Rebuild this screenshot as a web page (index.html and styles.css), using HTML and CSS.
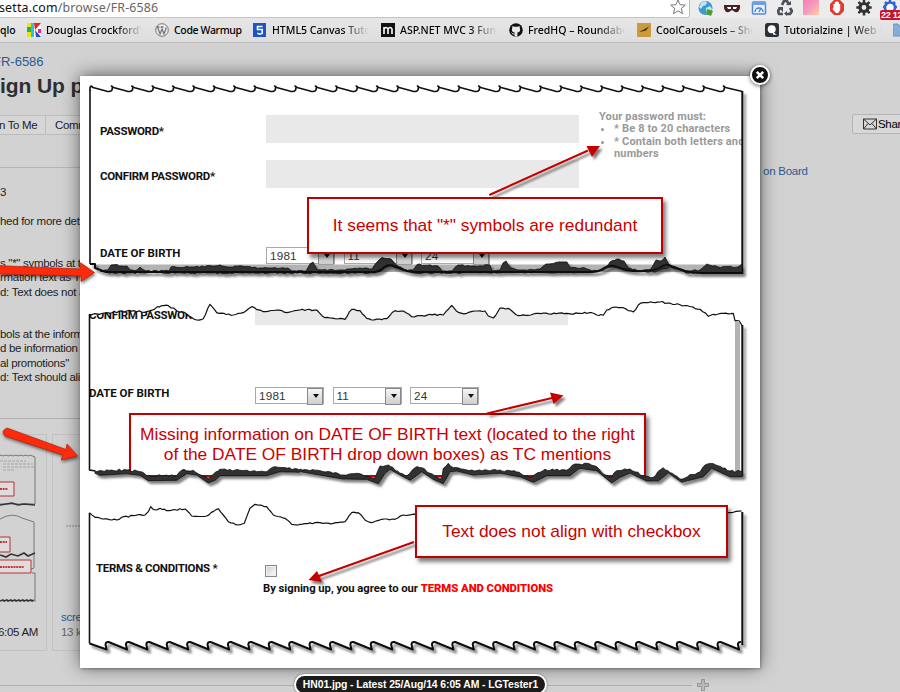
FILE: index.html
```html
<!DOCTYPE html>
<html lang="en">
<head>
<meta charset="utf-8">
<title>FR-6586</title>
<link rel="stylesheet" href="styles.css">
</head>
<body>
<header class="toolbar">
  <div class="address">
    <span class="url">setta.com<span class="url-path">/browse/FR-6586</span></span>
    <svg class="star" viewBox="0 0 16 16"><path d="M8 .8l2.1 4.9 5.2.4-4 3.4 1.3 5.2L8 11.900l-4.600 2.800 1.300-5.200-4-3.400 5.200-.4z" fill="#fff" stroke="#777" stroke-width="1"/></svg>
  </div>
  <div class="extensions">
    <svg viewBox="0 0 16 16"><circle cx="7.500" cy="8" r="7" fill="#3a9bd0"/><path d="M3 3q3-3 6-1l-1 3-3 1-2 3-2-2zM8 8l4-2 2 3-3 5-3 0z" fill="#bfe6ef"/><path d="M9 9l6 2-2 5-5-2z" fill="#4f9c2d"/></svg>
    <svg viewBox="0 0 16 16"><path d="M3 0h10v15H3z" fill="#eee"/><path d="M0 5h16v3q-1 5-5 4l-3-2-3 2q-4 1-5-4z" fill="#4b2020"/><path d="M3 7h4v2H4zM9 7h4l-1 2H9z" fill="#fff"/></svg>
    <svg viewBox="0 0 16 16"><rect x="1.500" y="2" width="13" height="12" rx="1" fill="#e8f0fb" stroke="#5489d8" stroke-width="1.500"/><path d="M1 2h14v3H1z" fill="#6d9fe8"/><path d="M4 12a4 4 0 0 1 8 0M8 12l2-4" fill="none" stroke="#4c80c8" stroke-width="1.300"/></svg>
    <svg viewBox="0 0 16 16"><g fill="none" stroke="#4b5157" stroke-width="2.700"><path d="M5 5l2-4h3l2 4M13 8l2 3-2 3H9M6 14H2l-1-3 2-3"/></g><path d="M9 5h5V1zM10 11v5l-3-2.500zM1 7h5v5z" fill="#4b5157"/></svg>
    <svg viewBox="0 0 16 16"><defs><linearGradient id="swatch" x2="1" y2="1"><stop stop-color="#f77cb8"/><stop offset=".5" stop-color="#f59bbf"/><stop offset="1" stop-color="#ffcf9a"/></linearGradient></defs><path d="M0 0h16v15H0z" fill="url(#swatch)"/></svg>
    <svg viewBox="0 0 16 16"><path d="M5 0h6l4 4v7l-4 4H5l-4-4V4z" fill="#e23b31"/><path d="M4.500 8V4h1.300V2h1.400v-.7h1.400V2H10v2h1.200v6l-2 3H7L3.500 9z" fill="#fff"/></svg>
    <svg viewBox="0 0 16 16"><circle cx="8" cy="7.500" r="4" fill="none" stroke="#333" stroke-width="3.200"/><path d="M8 0v3M8 12v3.500M.3 7.500h3M12.700 7.500h3M2.500 2l2.200 2.200M11.300 10.800l2.300 2.300M13.500 2l-2.200 2.200M4.700 10.800l-2.300 2.300" stroke="#333" stroke-width="2.500"/></svg>
    <div class="counter">
      <svg viewBox="0 0 16 16"><circle cx="8" cy="7.500" r="5" fill="#fff" stroke="#2b67d6" stroke-width="2.600"/><path d="M8 0v2M1 7h2M13 7h2M3 2l1.500 1.500M13 2l-1.500 1.500" stroke="#2b67d6" stroke-width="2.500"/></svg>
      <span class="counter-badge">22 12</span>
    </div>
  </div>
</header>

<nav class="bookmarks">
  <span class="bookmark first"><span class="name">qlo</span></span>
  <span class="bookmark"><svg viewBox="0 0 14 14"><path fill="#fff" d="M0 0h14v14H0z"/><path d="M0 0h4v4H0zM0 9h5v5H0z" fill="#f2e200"/><path d="M0 4h4v5H0z" fill="#28b34a"/><path d="M4 0h3v14H4z" fill="#2ac3d8"/><path d="M7 0h7L8 7z" fill="#e8231c"/><path d="M8 7l6 7H9z" fill="#2848d0"/><path d="M11 6h3v4h-3z" fill="#de2a83"/></svg><span class="name">Douglas Crockford's</span></span>
  <span class="bookmark short"><svg viewBox="0 0 14 14"><circle cx="7" cy="7" r="6.300" fill="#eee" stroke="#777"/><path d="M2.500 4l2.500 7 2-5 2 5 2.300-6.500M1.500 4h3M5.500 4h3" fill="none" stroke="#777" stroke-width="1.300"/></svg><span class="name">Code Warmup</span></span>
  <span class="bookmark"><svg viewBox="0 0 14 14"><path fill="#1b55c9" d="M0 0h13v14H0z"/><path d="M9.500 3.500h-5v3h4.700v4l-2.500.7-2.400-.9" fill="none" stroke="#fff" stroke-width="1.600"/></svg><span class="name">HTML5 Canvas Tutor</span></span>
  <span class="bookmark"><svg viewBox="0 0 14 14"><path fill="#111" d="M0 0h14v14H0z"/><path d="M3 11V4M3 6q2.200-3 4 0v5M7 6q2.500-3 4 0v5" fill="none" stroke="#fff" stroke-width="1.600"/></svg><span class="name">ASP.NET MVC 3 Fund</span></span>
  <span class="bookmark"><svg viewBox="0 0 14 14"><circle cx="7" cy="7" r="6.800" fill="#111"/><path d="M3.500 3l2 .8h3l2-.8.3 2q1.300 4-2.400 4.500v4H5.600v-4Q2 9 3.200 5z" fill="#e8e8e8"/><path d="M5.600 11q-2 .5-3-1.300" fill="none" stroke="#e8e8e8"/></svg><span class="name">FredHQ – Roundabou</span></span>
  <span class="bookmark"><svg viewBox="0 0 14 14"><path fill="#c99b3c" d="M0 0h14v14H0z"/><path d="M2 9l4-2 6-3.500-3 4-4 1z" fill="#40300d"/></svg><span class="name">CoolCarousels – Sho</span></span>
  <span class="bookmark"><svg viewBox="0 0 14 14"><rect width="14" height="14" rx="2.500" fill="#2a3137"/><circle cx="6.700" cy="6.300" r="4" fill="#fff"/><path d="M8 9l4 3-4-.5z" fill="#fff"/></svg><span class="name">Tutorialzine | Web D</span></span>
  <span class="bookmark"><svg viewBox="0 0 14 14"><path d="M0 2q0-1 1-1h4l1 2h8v10H0z" fill="#86aed4" stroke="#6b93ba"/></svg></span>
</nav>

<main class="page">
  <section class="issue">
    <div class="crumb">FR-6586</div>
    <h1>ign Up p</h1>
    <div class="actions"><span>n To Me</span><span>Comm</span></div>
    <div class="description">
      <p>3</p>
      <p>hed for more det</p>
      <p><span class="inset">s "*" symbols at t</span><br>rmation text as T<br>d: Text does not a</p>
      <p>bols at the inform<br>d be information<br>al promotions"<br>d: Text should ali</p>
    </div>
    <div class="attachments">
      <figure class="card left">
        <svg class="thumb" viewBox="0 0 46 176">
          <g fill="none" stroke="#777"><path d="M0 20l4 1 1-1 4 1 1-1 4 1 1-1 4 1 1-1 4 1 1-1 4 1 1-1 5 2V69H0M0 84q12-7 22-1l12 4V133l-5 2-5-3-6 4-8-3-5 2-5-2M32 138h3v29"/></g>
          <path d="M0 70l12-2 6 2 6-1 11 1M0 120l6 2 5-3 7 2 6-3 4 3 7-3M0 166l3-1 1 1 3-1 1 1 3-1 1 1 3-1 1 1 3-1 1 1 3-1 1 1 3-1 1 1 3-1 1 1 2-1" fill="none" stroke="#333" stroke-width="1.600"/>
          <g fill="#ddd" stroke="#bd3030"><path d="M-2 47h16v14H-2zM-2 102h12v15H-2zM-2 125h33v13H-2z"/></g>
          <g stroke="#999" stroke-width=".8" stroke-dasharray="3 1"><path d="M0 26h26M3 29h30M3 32h31M3 35h12"/></g>
          <path d="M0 54h8M0 107h7M0 132h24" stroke="#c33" stroke-width="2" stroke-dasharray="2 .7"/>
        </svg>
        <figcaption>6:05 AM</figcaption>
      </figure>
      <figure class="card right">
        <svg class="thumb" viewBox="0 0 60 176"><path d="M13 91h30" stroke="#888" stroke-dasharray="2 1"/></svg>
        <figcaption><span class="file">scre</span>13 k</figcaption>
      </figure>
    </div>
  </section>
  <aside class="side">
    <button class="share"><svg viewBox="0 0 14 12"><path d="M.5 1h13v10H.5zL7 7l6.500-6M.5 11L5 5.500M13.500 11L9 5.500" fill="none" stroke="#333"/></svg>Share</button>
    <div class="board">on Board</div>
  </aside>
  <div class="page-rule"><svg viewBox="0 0 12 12"><path d="M4.500.5h3v4h4v3h-4v4h-3v-4h-4v-3h4z" fill="#bbb" stroke="#999"/></svg></div>
</main>

<div class="lightbox">
  <section class="clip password">
    <div class="row tall"><label>PASSWORD*</label><div class="field"></div></div>
    <div class="row tall"><label>CONFIRM PASSWORD*</label><div class="field"></div></div>
    <div class="row"><label class="dob">DATE OF BIRTH</label><div class="selects"><span class="select">1981</span><span class="select">11</span><span class="select">24</span></div></div>
    <div class="rules">Your password must:<ul><li>* Be 8 to 20 characters</li><li>* Contain both letters and numbers</li></ul></div>
  </section>
  <section class="clip birth">
    <div class="row tall"><label class="cut">CONFIRM PASSWOR</label><div class="field"></div></div>
    <div class="row"><label class="dob">DATE OF BIRTH</label><div class="selects"><span class="select">1981</span><span class="select">11</span><span class="select">24</span></div></div>
  </section>
  <section class="clip terms">
    <div class="row"><label class="tc">TERMS &amp; CONDITIONS *</label><span class="checkbox"></span></div>
    <p class="agree">By signing up, you agree to our <b>TERMS AND CONDITIONS</b></p>
  </section>
  <div class="callout missing">Missing information on DATE OF BIRTH text (located to the right<br>of the DATE OF BIRTH drop down boxes) as TC mentions</div>
  <svg class="tears" viewBox="80 76 680 592">
    <defs>
      <filter id="soft" x="-10%" y="-10%" width="120%" height="130%"><feDropShadow dx="2.500" dy="3" stdDeviation="1.200" flood-opacity=".5"/></filter>
    </defs>
    <path class="band" d="M95 264.500H742V272H104L96 268z"/>
    <path class="band" d="M735 321l5 2V473l-5-1z"/>
    <path id="mask-top" class="paper"/>
    <path id="mask-bottom" class="paper"/>
    <g filter="url(#soft)">
      <path class="edge thick" d="M742.300 91V274M742.300 325V476M742.300 512V645"/>
      <path id="ridge" class="ink"/>
      <path class="edge thick" d="M90 264h5v4l8 3q4 1.500 8 1H374q5 0 8-3 6-6 12-3l10 4q4 2 10 2H590q8 0 14-4 5-3 10-2l12 4q10 2 18 1 10 0 17-4 5-4 10-1l14 5q8 2 16 2H742"/>
      <path id="torn" class="ink"/>
      <path id="saw-bottom" class="edge thick"/>
    </g>
    <path class="edge" d="M90 90V264M89.500 314V470l6 1M89.500 513V643.500"/>
    <path id="saw-top" class="edge"/>
    <path id="line-two" class="edge thin"/>
    <path id="line-three" class="edge thin"/>
    <g filter="url(#soft)" class="pointer">
      <path class="shaft" d="M489.300 195L588 150.500M487 413.500L552 398M414 542L319 576"/>
      <path d="M586.500 146H600L592 157zM550 392.500L563.500 395.500 553.500 404zM317 571L308.500 580 322 582z"/>
    </g>
  </svg>
  <div class="callout redundant">It seems that "*" symbols are redundant</div>
  <div class="callout align">Text does not align with checkbox</div>
</div>
<svg class="close" viewBox="0 0 24 24"><circle cx="12" cy="12" r="9" fill="#111" stroke="#fff" stroke-width="2"/><path d="M8.800 8.800l6.400 6.400M15.200 8.800l-6.400 6.400" stroke="#fff" stroke-width="2.600"/></svg>
<svg class="arrows" viewBox="0 0 100 470"><path d="M-5 265.500L80.500 269V262.700L94.500 272.500 81 281.500V276L-5 274z"/><path d="M7 428L66 449.500 67 444 77.500 456 61 460 63 455 5 436Q0 431 7 428z"/></svg>
<div class="caption">HN01.jpg - Latest 25/Aug/14 6:05 AM - LGTester1</div>
<script src="edges.js"></script>
</body>
</html>
```
FILE: styles.css
```css
* { box-sizing: border-box; }
body { margin: 0; width: 900px; height: 692px; overflow: hidden; position: relative; background: #d2d2d2; font-family: "Liberation Sans", Arial, sans-serif; color: #222; }
p, h1, figure, ul { margin: 0; }
.toolbar { display: flex; height: 18px; background: #ececec; }
.address { display: flex; justify-content: space-between; width: 690px; height: 18px; padding-right: 3px; background: #fff; border-right: 1px solid #bbb; border-bottom: 1px solid #c4c4c4; border-radius: 0 0 3px 0; }
.url { margin-left: -1px; font: 12.400px/15px "Noto Sans", sans-serif; letter-spacing: .17px; color: #111; white-space: nowrap; }
.url-path { color: #666; }
.star { width: 16px; height: 16px; margin-top: -1px; }
.extensions { display: flex; gap: 10.300px; padding-left: 8px; }
.extensions svg { width: 16px; height: 16px; flex: none; display: block; }
.counter { position: relative; }
.counter-badge { position: absolute; left: -2px; top: 10px; width: 30px; height: 10px; padding-left: 1px; background: #c5142a; color: #fff; font: bold 9px/10px "Liberation Sans", sans-serif; letter-spacing: -.3px; border-radius: 2px; white-space: nowrap; }
.bookmarks { display: flex; height: 25px; align-items: center; background: linear-gradient(#e6e6e6, #dedede); border-bottom: 1px solid #bcbcbc; font: 500 10.500px/16px "Noto Sans", sans-serif; color: #000; overflow: hidden; }
.bookmark { display: flex; gap: 5px; align-items: center; flex: 0 0 128px; min-width: 0; padding-right: 12px; }
.bookmark.first { flex-basis: 27px; padding-right: 0; }
.bookmark.short { flex-basis: 98px; padding-right: 0; }
.bookmark svg { width: 14px; height: 14px; flex: none; }
.name { flex: 1; min-width: 0; overflow: hidden; white-space: nowrap; -webkit-mask-image: linear-gradient(90deg, #000 72%, transparent); mask-image: linear-gradient(90deg, #000 72%, transparent); }
.first .name, .short .name { -webkit-mask-image: none; mask-image: none; overflow: visible; }
.short .name { letter-spacing: -.35px; }

.page { display: grid; grid-template-columns: 81px 137px; justify-content: space-between; position: relative; height: 649px; }
.issue { overflow: hidden; white-space: nowrap; }
.crumb { height: 27px; padding-top: 11px; margin-left: -7px; font-size: 13px; line-height: 15px; color: #2b5a90; }
h1 { height: 45px; font-size: 21px; line-height: 32px; color: #2f2f2f; letter-spacing: -.1px; }
.actions { display: flex; height: 20px; font-size: 11.500px; line-height: 18px; letter-spacing: -.35px; }
.actions span { flex: 0 0 46px; border: 1px solid #bdbdbd; border-left: 0; background: #d6d6d6; margin-left: 0; text-indent: -1px; }
.actions span + span { flex-basis: 60px; padding-left: 10px; }
.description { height: 251px; margin-top: 32px; padding-top: 17px; border-top: 1px solid #b5b5b5; font-size: 11.500px; line-height: 14.300px; letter-spacing: -.3px; }
.description p + p { margin-top: 14.300px; }
.description p:nth-child(3) { margin-top: 28.300px; }
.description p:nth-child(4) { margin-top: 28px; }
.attachments { display: flex; gap: 5px; padding-top: 15px; border-top: 1px solid #b0b0b0; }
.card { flex: none; width: 47px; height: 217px; border: 1px solid #c3c3c3; border-left: 0; font-size: 11.500px; line-height: 15px; letter-spacing: -.3px; overflow: hidden; }
.card.right { width: 128px; border-left: 1px solid #c3c3c3; }
.thumb { display: block; width: 46px; height: 176px; overflow: visible; }
.card.right .thumb { width: 60px; }
.card.left figcaption { padding-top: 14px; text-indent: -2px; }
.card.right figcaption { margin-top: -1px; padding-left: 8px; color: #666; }
.file { display: block; color: #2b5a90; }
.side { padding-top: 71px; font-size: 11.500px; letter-spacing: -.25px; color: #2b5a90; }
.share { display: flex; align-items: center; gap: 1px; width: 70px; height: 20px; margin-left: 89px; padding: 0 0 0 10px; border: 1px solid #b5b5b5; border-radius: 2px; background: #d8d8d8; font: 11.500px "Liberation Sans", sans-serif; letter-spacing: -.3px; }
.share svg { width: 14px; height: 12px; flex: none; }
.board { margin-top: 30px; line-height: 14px; }
.page-rule { position: absolute; left: 0; top: 636px; display: flex; align-items: center; width: 709px; gap: 5px; }
.page-rule::before { content: ""; flex: 1; height: 1px; background: #b0b0b0; }
.page-rule svg { width: 12px; height: 12px; }

.lightbox { position: absolute; left: 80px; top: 76px; width: 680px; height: 592px; background: #fff; box-shadow: 0 -1px 17px rgba(0,0,0,.55), 1px 1px 3px rgba(0,0,0,.3); font: bold 11.500px/14px Roboto, sans-serif; color: #111; }
.clip { position: relative; }
.password { height: 214px; padding: 39px 0 0 20px; }
.birth { height: 205px; padding: 6px 0 0 9px; }
.terms { height: 173px; padding: 66px 0 0 16px; }
.row { display: flex; align-items: flex-start; }
.row.tall { height: 44.500px; }
.row label { flex: none; width: 166px; padding-top: 9px; letter-spacing: -.3px; white-space: nowrap; }
.row label.dob { letter-spacing: -.05px; }
.field { width: 313px; height: 28px; background: #e9e9e9; }
.password .row:nth-child(3) { margin-top: 43px; }
.password .row:nth-child(3) label, .birth .row:nth-child(2) label { padding-top: 0; margin-top: -1px; }
.birth .row.tall { height: 91px; }
.birth .field { margin-top: 1px; }
.birth .row .cut { padding-top: 12px; }
.selects { display: flex; gap: 8.500px; }
.select { position: relative; width: 69px; height: 17px; padding-left: 3px; border: 1px solid #aaa; font: 11.700px/16px "Liberation Sans", sans-serif; color: #333; letter-spacing: .2px; }
.select::before { content: ""; position: absolute; right: 0; top: 0; width: 14px; height: 15px; border: 1px solid #888; background: linear-gradient(#f6f6f6, #cecece); }
.select::after { content: ""; position: absolute; right: 4px; top: 6px; border: 3.500px solid transparent; border-top: 4px solid #111; border-bottom: 0; }
.rules { position: absolute; left: 519px; top: 35px; width: 144px; overflow: hidden; color: #999; font-size: 11px; line-height: 12.300px; letter-spacing: .15px; white-space: nowrap; }
.rules ul { padding-left: 15px; white-space: normal; width: 150px; }
.terms .row label { width: 169px; padding-top: 0; }
.checkbox { width: 12px; height: 12px; margin-top: 4px; border: 1px solid #888; background: linear-gradient(135deg, #ccc, #fff); box-shadow: inset 0 0 0 1px #eee; }
.agree { margin-top: 5px; padding-left: 167px; font-size: 11.300px; letter-spacing: -.05px; }
.agree b { color: #f00; }
.tears { position: absolute; inset: 0; width: 680px; height: 592px; }
.band { fill: #b2b2b2; }
.paper { fill: #fff; }
.ink { fill: #303030; stroke: #111; stroke-width: .8; }
.edge { fill: none; stroke: #111; stroke-width: 1.600; stroke-linejoin: round; }
.edge.thin { stroke-width: 1.200; }
.edge.thick { stroke-width: 2; }
.pointer { fill: #c40000; }
.shaft { stroke: #c40000; stroke-width: 2; fill: none; }
.callout { position: absolute; display: flex; align-items: center; justify-content: center; padding-bottom: 2px; background: #fff; border: 2.500px solid #c00000; box-shadow: 3px 4px 4px rgba(0,0,0,.5); color: #c90000; font: 17.350px/20px "Liberation Sans", sans-serif; white-space: nowrap; text-align: center; }
.redundant { left: 227px; top: 121px; width: 356px; height: 57px; }
.missing { left: 49px; top: 337px; width: 517px; height: 64px; }
.align { left: 335px; top: 429px; width: 313px; height: 53px; }
.close { position: absolute; left: 748px; top: 63px; width: 24px; height: 24px; filter: drop-shadow(0 1px 2px rgba(0,0,0,.6)); }
.arrows { position: absolute; left: 0; top: 0; width: 100px; height: 470px; fill: #fb2b0b; stroke: #b81c06; stroke-width: .7; filter: drop-shadow(1px 2px 1.500px rgba(0,0,0,.5)); }
.caption { position: absolute; left: 294px; top: 674px; width: 253px; height: 21px; border: 2px solid #fff; border-radius: 11px; background: #1b1b1b; color: #fff; font: bold 10.400px/17px "Liberation Sans", sans-serif; letter-spacing: -.08px; text-align: center; white-space: nowrap; box-shadow: 0 0 2px #555; }
```
FILE: edges.js
```js
// Torn paper outlines. Points are stored at three units per pixel, offset per group.
function points(groups) {
  const out = [];
  for (const [ox, oy, list] of groups) {
    for (let i = 0; i < list.length; i += 2) out.push([ox + list[i] / 3, oy + list[i + 1] / 3]);
  }
  return out;
}

// Adds a small, repeatable roughness between the given points.
function rough(pts, amount) {
  let seed = 7;
  const rand = () => { seed = (seed * 1103515245 + 12345) % 2147483648; return seed / 2147483648 - 0.5; };
  const out = [];
  for (let i = 0; i < pts.length - 1; i++) {
    const [x1, y1] = pts[i], [x2, y2] = pts[i + 1];
    const n = Math.max(1, Math.round(Math.abs(x2 - x1) / 2.5));
    for (let k = 0; k < n; k++) {
      const t = k / n;
      out.push([x1 + (x2 - x1) * t, y1 + (y2 - y1) * t + (k ? rand() * amount : 0)]);
    }
  }
  out.push(pts[pts.length - 1]);
  return out;
}

const str = pts => pts.map(p => p[0].toFixed(1) + ' ' + p[1].toFixed(1)).join('L');
const set = (id, d) => document.getElementById(id).setAttribute('d', d);

set('saw-top', 'M90 91V87.500L91 86' + 'l2 1.500l13 3.500q4 1.500 6-1l.5-3l-1.100-1'.repeat(31) + 'l2 1.500l17 4');
set('saw-bottom', 'M89.500 643.500L106.700 649.500l-1.200-5q.5-3 3.100-2.500' + 'l18.500 7.500l-1.200-5q.5-3 3.100-2.500'.repeat(31));

const two = rough(points([
  [0, 290, [268,74,320,68,380,63,410,65,440,65,450,62,485,47,505,47,530,62,560,72,590,90,610,86,630,43,650,68,700,75,730,68,755,50,790,65,830,60,860,68,898,60]],
  [300, 290, [0,60,50,60,75,83,135,88,155,58,180,62,200,85,215,90,260,86,285,62,310,63,335,80,420,73,430,75,455,46,475,67,500,70,525,63,555,63,565,78,580,84,600,54,625,55,655,77,700,72,800,70,835,70]],
  [580, 290, [0,70,35,68,50,75,70,76,80,60,100,52,130,53,160,66,175,45,190,38,240,36,300,44,360,58,385,79,400,73,460,70,465,92,478,93,487,108]]
]), 1.8);
set('line-two', 'M' + str(two));
set('mask-top', 'M85 295L' + str(two) + 'L750 325V295z');

set('line-three', 'M' + str(rough(points([
  [0, 470, [268,128,285,142,350,150,365,142,400,137,435,135,445,125,452,110,465,120,480,115,500,122,555,117,575,138,620,138,655,116,685,155,715,165,733,160,750,115,765,103,800,110,820,135,855,145,875,163,895,165]],
  [300, 480, [0,133,60,128,100,130,135,125,155,98,175,98,195,120,215,128,245,118,285,118,310,105,350,104]],
  [580, 480, [445,98,460,97,485,93]]
]), 1.5)));

const top2 = rough(points([
  [0, 290, [285,545,320,540,380,540,420,545,440,557,530,557,545,541,580,541,610,558,625,568,640,553,660,538,800,545,825,530,898,540]],
  [300, 290, [0,537,60,542,130,555,170,550,210,562,225,566,240,528,265,525,300,550,320,558,345,533,365,533,390,550,425,568,430,535,445,520,460,533,500,540,600,540,650,546,690,563,735,538,800,541,825,522,835,522]],
  [580, 290, [0,523,20,520,50,530,75,555,95,560,110,542,150,537,190,558,220,562,240,540,250,533,270,548,300,568,360,546,375,525,400,521,450,543,487,545]]
]), 2.2);
const bottom2 = points([
  [0, 290, [285,550,300,556,380,551,420,556,445,572,530,571,560,551,590,555,625,579,645,571,660,557,800,557,840,545,898,547]],
  [300, 290, [0,545,60,555,130,567,200,568,235,581,255,550,270,538,300,555,330,571,365,545,400,568,430,581,450,545,470,543,520,555,600,550,660,560,700,577,740,557,810,557,835,538]],
  [580, 290, [0,535,50,542,95,579,120,562,150,549,200,573,235,573,265,549,305,577,370,560,395,535,450,560,487,560]]
]);
set('torn', 'M' + str(top2) + 'L' + str([...bottom2].reverse()) + 'z');
set('mask-bottom', 'M88 473L' + str(bottom2) + 'L750 490H88z');

const ridge = [[100,271],[108,270],[111,265],[117,264.500],[121,266],[127,266],[130,270],[137,270],[140,267],[146,271],[169,271],[171,267],[192,267],[212,266],[220,265],[230,267],[242,266],[260,268],[288,268],[292,271],[306,271],[310,264],[313,262],[317,270],[340,270],[350,269],[360,268],[372,269],[378,261],[382,257.500],[391,259],[396,265],[405,270],[413,270],[417,264.500],[438,266],[442,271],[452,271],[458,265],[470,266],[490,265],[492,271],[500,270],[503,263],[506,261],[511,268],[522,270],[540,269],[546,264],[556,262.500],[567,262],[570,268],[585,268],[592,271],[604,270],[610,262],[617,259],[624,261],[628,268],[640,271],[651,269],[656,260],[661,261],[665,257],[669,265],[685,271],[700,270],[707,264],[718,267],[738,267],[742,264],[742,273],[686,273],[669,267],[655,272],[636,271],[612,267],[596,272],[414,273],[390,266],[375,273],[110,273]];
set('ridge', 'M' + str(rough(ridge, 1.5)) + 'z');
```
